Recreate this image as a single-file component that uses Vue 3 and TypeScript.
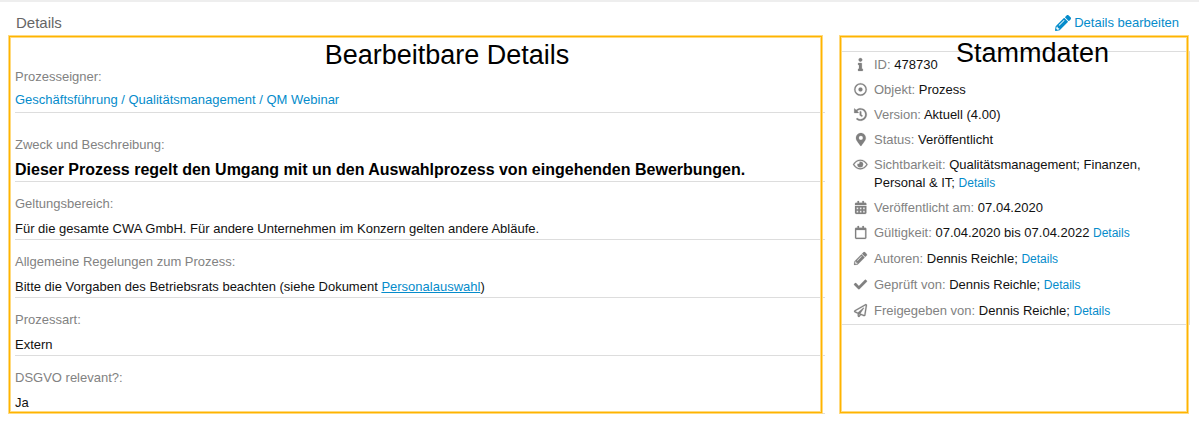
<script setup lang="ts">
interface Field {
  label: string
  value: string
  kind?: 'owner' | 'heading'
  link?: string
  after?: string
}

interface Meta {
  label: string
  value: string
  icon: string
  viewBox: string
  size?: string
  details?: boolean
}

const pencil =
  'M497.9 142.1l-46.1 46.1c-4.7 4.7-12.3 4.7-17 0l-111-111c-4.7-4.7-4.7-12.3 0-17l46.1-46.1c18.7-18.7 49.1-18.7 67.9 0l60.1 60.1c18.8 18.7 18.8 49.1 0 67.9zM284.2 99.8L21.6 362.4.4 483.9c-2.9 16.4 11.4 30.6 27.8 27.8l121.5-21.3 262.6-262.6c4.7-4.7 4.7-12.3 0-17l-111-111c-4.8-4.7-12.4-4.7-17.1 0zM124.1 339.9c-5.5-5.5-5.5-14.3 0-19.8l154-154c5.5-5.5 14.3-5.5 19.8 0s5.5 14.3 0 19.8l-154 154c-5.5 5.5-14.3 5.5-19.8 0zM88 424h48v36.3l-64.5 11.3-31.1-31.1L51.7 376H88v48z'

const fields: Field[] = [
  { label: 'Prozesseigner:', value: '', link: 'Geschäftsführung / Qualitätsmanagement / QM Webinar', kind: 'owner' },
  {
    label: 'Zweck und Beschreibung:',
    value: 'Dieser Prozess regelt den Umgang mit un den Auswahlprozess von eingehenden Bewerbungen.',
    kind: 'heading',
  },
  {
    label: 'Geltungsbereich:',
    value: 'Für die gesamte CWA GmbH. Für andere Unternehmen im Konzern gelten andere Abläufe.',
  },
  {
    label: 'Allgemeine Regelungen zum Prozess:',
    value: 'Bitte die Vorgaben des Betriebsrats beachten (siehe Dokument ',
    link: 'Personalauswahl',
    after: ')',
  },
  { label: 'Prozessart:', value: 'Extern' },
  { label: 'DSGVO relevant?:', value: 'Ja' },
]

const meta: Meta[] = [
  {
    label: 'ID:',
    value: '478730',
    viewBox: '0 0 192 512',
    icon: 'M20 424.229h20V279.771H20c-11.046 0-20-8.954-20-20V212c0-11.046 8.954-20 20-20h112c11.046 0 20 8.954 20 20v212.229h20c11.046 0 20 8.954 20 20V492c0 11.046-8.954 20-20 20H20c-11.046 0-20-8.954-20-20v-47.771c0-11.046 8.954-20 20-20zM96 0C56.235 0 24 32.235 24 72s32.235 72 72 72 72-32.235 72-72S135.764 0 96 0z',
  },
  {
    label: 'Objekt:',
    value: 'Prozess',
    viewBox: '0 0 512 512',
    icon: 'M256 8a248 248 0 1 0 0 496a248 248 0 1 0 0-496zm0 48a200 200 0 1 1 0 400a200 200 0 1 1 0-400zm0 120a80 80 0 1 0 0 160a80 80 0 1 0 0-160z',
  },
  {
    label: 'Version:',
    value: 'Aktuell (4.00)',
    viewBox: '0 0 512 512',
    icon: 'M504 255.531c.253 136.64-111.18 248.372-247.82 248.468-59.015.042-113.223-20.53-155.822-54.911-11.077-8.94-11.905-25.541-1.839-35.607l11.267-11.267c8.609-8.609 22.353-9.551 31.891-1.984C173.062 425.135 212.781 440 256 440c101.705 0 184-82.311 184-184 0-101.705-82.311-184-184-184-48.814 0-93.149 18.969-126.068 49.932l50.754 50.754c10.08 10.08 2.941 27.314-11.313 27.314H24c-8.837 0-16-7.163-16-16V38.627c0-14.254 17.234-21.393 27.314-11.314l49.372 49.372C129.209 34.136 189.552 8 256 8c136.81 0 247.747 110.78 248 247.531zm-180.912 78.784l9.823-12.63c8.138-10.463 6.253-25.542-4.21-33.679L288 256.349V152c0-13.255-10.745-24-24-24h-16c-13.255 0-24 10.745-24 24v135.651l65.409 50.874c10.463 8.137 25.541 6.253 33.679-4.21z',
  },
  {
    label: 'Status:',
    value: 'Veröffentlicht',
    viewBox: '0 0 384 512',
    icon: 'M172.268 501.67C26.97 291.031 0 269.413 0 192 0 85.961 85.961 0 192 0s192 85.961 192 192c0 77.413-26.97 99.031-172.268 309.67-9.535 13.774-29.93 13.773-39.464 0zM192 272c44.183 0 80-35.817 80-80s-35.817-80-80-80-80 35.817-80 80 35.817 80 80 80z',
  },
  {
    label: 'Sichtbarkeit:',
    value: 'Qualitätsmanagement; Finanzen, Personal & IT;',
    details: true,
    viewBox: '0 0 576 512',
    icon: 'M288 144a110.94 110.94 0 0 0-31.24 5 55.4 55.4 0 0 1 7.24 27 56 56 0 0 1-56 56 55.4 55.4 0 0 1-27-7.24A111.71 111.71 0 1 0 288 144zm284.52 97.4C518.29 135.59 410.93 64 288 64S57.68 135.64 3.48 241.41a32.35 32.35 0 0 0 0 29.19C57.71 376.41 165.07 448 288 448s230.32-71.64 284.52-177.41a32.35 32.35 0 0 0 0-29.19zM288 400c-98.65 0-189.09-55-237.93-144C98.91 167 189.34 112 288 112s189.09 55 237.93 144C477.1 345 386.66 400 288 400z',
  },
  {
    label: 'Veröffentlicht am:',
    value: '07.04.2020',
    viewBox: '0 0 448 512',
    icon: 'M0 464c0 26.5 21.5 48 48 48h352c26.5 0 48-21.5 48-48V192H0zM64 256h64v64H64zm128 0h64v64h-64zm128 0h64v64h-64zM64 384h64v64H64zm128 0h64v64h-64zm128 0h64v64h-64zM400 64h-48V16c0-8.8-7.2-16-16-16h-32c-8.8 0-16 7.2-16 16v48H160V16c0-8.8-7.2-16-16-16h-32c-8.8 0-16 7.2-16 16v48H48C21.5 64 0 85.5 0 112v48h448v-48c0-26.5-21.5-48-48-48z',
  },
  {
    label: 'Gültigkeit:',
    value: '07.04.2020 bis 07.04.2022',
    details: true,
    size: 'tall',
    viewBox: '0 0 448 512',
    icon: 'M400 64h-48V12c0-6.6-5.4-12-12-12h-40c-6.6 0-12 5.4-12 12v52H160V12c0-6.6-5.4-12-12-12h-40c-6.6 0-12 5.4-12 12v52H48C21.5 64 0 85.5 0 112v352c0 26.5 21.5 48 48 48h352c26.5 0 48-21.5 48-48V112c0-26.5-21.5-48-48-48zm-6 400H54c-3.3 0-6-2.7-6-6V160h352v298c0 3.3-2.7 6-6 6z',
  },
  { label: 'Autoren:', value: 'Dennis Reichle;', details: true, size: 'tall', viewBox: '0 0 512 512', icon: pencil },
  {
    label: 'Geprüft von:',
    value: 'Dennis Reichle;',
    details: true,
    size: 'tall',
    viewBox: '0 0 512 512',
    icon: 'M173.898 439.404l-166.4-166.4c-9.997-9.997-9.997-26.206 0-36.204l36.203-36.204c9.997-9.998 26.207-9.998 36.204 0L192 312.69 432.095 72.596c9.997-9.997 26.207-9.997 36.204 0l36.203 36.204c9.997 9.997 9.997 26.206 0 36.204l-294.4 294.401c-9.998 9.997-26.207 9.997-36.204-.001z',
  },
  {
    label: 'Freigegeben von:',
    value: 'Dennis Reichle;',
    details: true,
    viewBox: '0 0 512 512',
    icon: 'M440 6.5L24 246.4c-34.4 19.9-31.1 70.8 5.7 85.9L144 379.6V464c0 46.4 59.2 65.5 86.6 28.6l43.8-59.1 111.9 46.2c5.9 2.4 12.1 3.6 18.3 3.6 8.2 0 16.3-2.1 23.6-6.2 12.8-7.2 21.6-20 23.9-34.5l59.4-387.2c6.1-40.1-36.9-68.8-71.5-48.9zM192 464v-64.6l36.6 15.1L192 464zm212.6-28.7l-153.8-63.5L391 169.5c10.7-15.5-9.5-33.5-23.7-21.2L155.8 332.6 48 288 464 48l-59.4 387.3z',
  },
]
</script>

<template>
  <main class="page">
    <header class="header">
      <h1 class="title">Details</h1>
      <a href="#" class="edit">
        <svg class="edit-icon" viewBox="0 0 512 512" aria-hidden="true"><path :d="pencil" /></svg>
        Details bearbeiten
      </a>
    </header>

    <div class="columns">
      <section class="panel left">
        <h2 class="caption">Bearbeitbare Details</h2>
        <dl class="fields">
          <div v-for="f in fields" :key="f.label" class="field" :class="f.kind">
            <dt>{{ f.label }}</dt>
            <dd>{{ f.value }}<a v-if="f.link" href="#" :class="{ underlined: f.after }">{{ f.link }}</a>{{ f.after }}</dd>
          </div>
        </dl>
      </section>

      <section class="panel right">
        <h2 class="caption">Stammdaten</h2>
        <ul class="meta">
          <li v-for="m in meta" :key="m.label" :class="m.size">
            <span class="icon">
              <svg :viewBox="m.viewBox" aria-hidden="true"><path fill-rule="evenodd" :d="m.icon" /></svg>
            </span>
            <span class="text">
              <span class="name">{{ m.label }}</span> {{ m.value }}
              <a v-if="m.details" href="#">Details</a>
            </span>
          </li>
        </ul>
      </section>
    </div>
  </main>
</template>

<style>
body {
  background: #fff;
}
</style>

<style scoped>
.page {
  border-top: 2px solid #eee;
  font: 13px/18px 'Liberation Sans', Arial, sans-serif;
  color: #111;
}

a {
  color: #058ccb;
  text-decoration: none;
}

svg {
  display: block;
  fill: currentColor;
}

.header {
  display: flex;
  align-items: center;
  justify-content: space-between;
  padding: 12px 20px 5px 16px;
}

.title {
  margin: 0;
  font-size: 15px;
  font-weight: 400;
  color: #666;
}

.edit {
  display: flex;
  align-items: center;
  gap: 3px;
}

.edit-icon {
  width: 16px;
  height: 16px;
}

.columns {
  display: grid;
  grid-template-columns: minmax(0, 810fr) minmax(0, 349fr);
  gap: 16px;
  padding: 0 9px 0 15px;
}

.panel {
  position: relative;
}

/* highlight frame drawn over the panel content */
.panel::after {
  content: '';
  position: absolute;
  inset: -2px 1px 0 -2px;
  border: 1px solid #ffda80;
  box-shadow: inset 0 0 0 1px #ffb400, inset 0 0 0 2px #ffda80;
  pointer-events: none;
}

.left::after {
  inset: -2px 2px 0 -7px;
}

.caption {
  position: absolute;
  top: 2px;
  left: 0;
  right: 0;
  margin: 0;
  text-align: center;
  font-size: 27px;
  line-height: 32px;
  font-weight: 400;
  color: #000;
  z-index: 1;
}

.left .caption {
  left: 54px;
}

.right .caption {
  top: 0;
  left: 34px;
}

.fields {
  margin: 0;
  padding-top: 18px;
}

.field {
  padding: 13px 0 1px;
  border-bottom: 1px solid #ddd;
}

dt {
  color: #828282;
}

dd {
  margin: 7px 0 0;
}

.owner {
  padding-bottom: 3px;
}

.owner dd {
  margin-top: 5px;
}

.heading {
  padding: 23px 0 2px;
}

.heading dd {
  margin-top: 6px;
  font-size: 16px;
  font-weight: 700;
  line-height: 19px;
  color: #000;
}

.underlined {
  text-decoration: underline;
}

.meta {
  list-style: none;
  margin: 14px 0 0;
  padding: 4px 46px 4px 12px;
  border: solid #ddd;
  border-width: 1px 1px 1px 0;
}

.meta li {
  display: flex;
  gap: 6px;
  padding-bottom: 7px;
}

.meta li.tall {
  padding-bottom: 8px;
}

.meta li:last-child {
  padding-bottom: 0;
}

.icon {
  flex: none;
  display: flex;
  align-items: center;
  justify-content: center;
  width: 15px;
  height: 17px;
  color: #808080;
}

.icon svg {
  height: 13px;
  stroke: currentColor;
  stroke-width: 8px;
  overflow: visible;
}

.name {
  color: #828282;
}

.meta a {
  font-size: 12px;
}
</style>
